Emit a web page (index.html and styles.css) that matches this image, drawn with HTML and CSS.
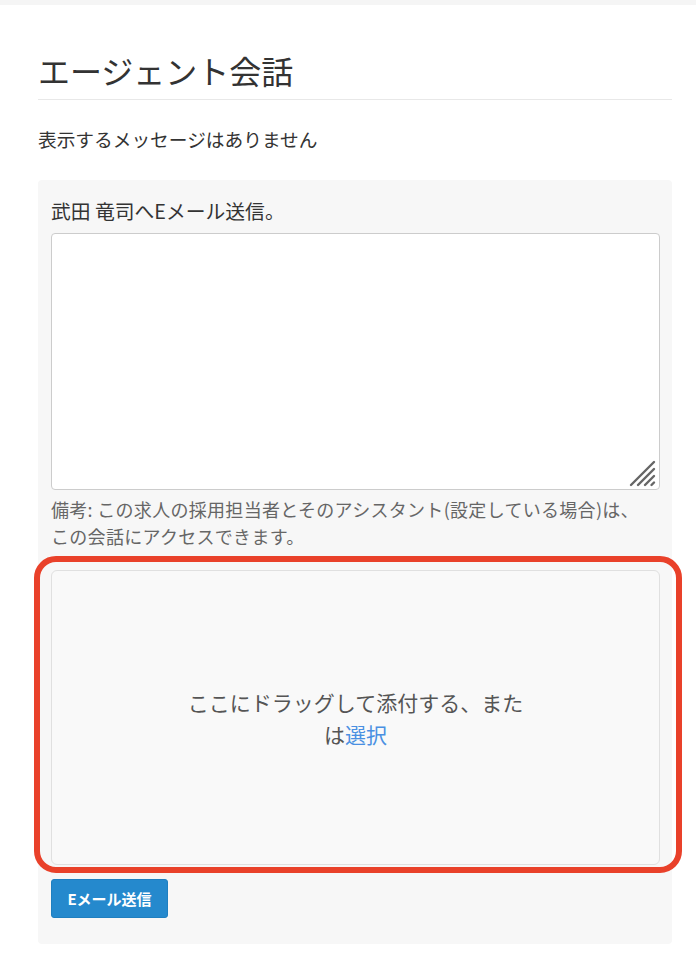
FILE: index.html
```html
<!DOCTYPE html>
<html lang="ja">
<head>
<meta charset="utf-8">
<title>エージェント会話</title>
<link rel="stylesheet" href="styles.css">
</head>
<body>
<div class="topbar"></div>
<main class="page">
  <h1 class="title">エージェント会話</h1>
  <p class="empty">表示するメッセージはありません</p>
  <section class="panel">
    <label class="label" for="msg">武田 竜司へEメール送信。</label>
    <div class="textarea-wrap">
      <textarea id="msg" class="textarea"></textarea>
      <svg class="grip" width="30" height="30" viewBox="0 0 30 30" aria-hidden="true">
        <g stroke="#666666" stroke-width="2.4" stroke-linecap="round">
          <line x1="3" y1="27" x2="26" y2="4"/>
          <line x1="10" y1="27" x2="26" y2="11"/>
          <line x1="17" y1="27" x2="26" y2="18"/>
          <line x1="23.5" y1="27" x2="26" y2="24.5"/>
        </g>
      </svg>
    </div>
    <p class="note">備考: この求人の採用担当者とそのアシスタント(設定している場合)は、この会話にアクセスできます。</p>
    <div class="dropzone">
      <p class="drop-text">ここにドラッグして添付する、または<a class="link" href="#">選択</a></p>
      <div class="highlight"></div>
    </div>
    <button class="btn" type="button">Eメール送信</button>
  </section>
</main>
</body>
</html>
```
FILE: styles.css
```css
html, body {
  margin: 0;
  padding: 0;
  background: #ffffff;
}
body {
  font-family: "Noto Sans CJK JP", "Noto Sans", sans-serif;
  color: #333333;
}
.topbar {
  height: 5px;
  background: #f5f5f5;
}
.page {
  padding: 0 24px 0 38px;
}
.title {
  margin: 47px 0 0;
  padding-bottom: 10px;
  font-size: 32px;
  line-height: 37px;
  font-weight: 400;
  color: #333333;
  border-bottom: 1px solid #e8e8e8;
}
.empty {
  margin: 26px 0 0;
  font-size: 18.7px;
  line-height: 26px;
  color: #333333;
}
.panel {
  margin-top: 28px;
  background: #f7f7f7;
  border-radius: 4px;
  padding: 18px 12px 26px 13px;
  display: flex;
  flex-direction: column;
  align-items: stretch;
}
.label {
  display: block;
  font-size: 19.8px;
  line-height: 26px;
  color: #333333;
}
.textarea-wrap {
  position: relative;
  margin-top: 9px;
  height: 257px;
}
.textarea {
  display: block;
  box-sizing: border-box;
  width: 100%;
  height: 100%;
  margin: 0;
  border: 1px solid #cccccc;
  border-radius: 4px;
  background: #ffffff;
  resize: none;
  font: inherit;
}
.grip {
  position: absolute;
  right: 2px;
  bottom: 2px;
}
.note {
  margin: 6px 0 0;
  padding-right: 16px;
  font-size: 18px;
  letter-spacing: 0.3px;
  line-height: 27px;
  color: #666666;
}
.dropzone {
  position: relative;
  margin-top: 20px;
  height: 295px;
  box-sizing: border-box;
  border: 1px solid #e0e0e0;
  border-radius: 6px;
  background: #f9f9f9;
  display: flex;
  align-items: center;
  justify-content: center;
}
.drop-text {
  margin: 0;
  width: 350px;
  text-align: center;
  font-size: 21px;
  line-height: 32px;
  color: #555555;
}
.link {
  color: #4a90e2;
  text-decoration: none;
}
.highlight {
  position: absolute;
  top: -15px;
  left: -18px;
  right: -23px;
  bottom: -9px;
  border: 6px solid #e9412a;
  border-radius: 22px;
  pointer-events: none;
}
.btn {
  align-self: flex-start;
  margin-top: 14px;
  width: 117px;
  height: 39px;
  border: 1px solid #1f7fc0;
  border-radius: 3px;
  background: #2589cd;
  color: #ffffff;
  font-family: "Noto Sans CJK JP", "Noto Sans", sans-serif;
  font-size: 15px;
  font-weight: 700;
  padding: 0;
}
```
